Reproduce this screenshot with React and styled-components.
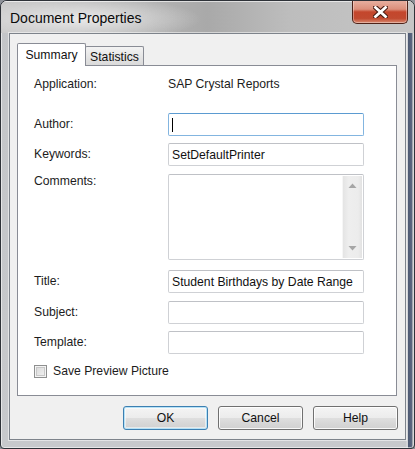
import React from "react";
import styled, { createGlobalStyle } from "styled-components";

const Global = createGlobalStyle`
  html, body { margin: 0; padding: 0; background: #8d9198; }
  body { font-family: "Segoe UI", "Liberation Sans", Arial, sans-serif; }
  * { box-sizing: border-box; }
`;

const Window = styled.div`
  width: 415px;
  height: 449px;
  display: flex;
  flex-direction: column;
  border: 1px solid #2e3238;
  border-radius: 7px 7px 4px 4px;
  padding: 0 8px 8px 8px;
  overflow: hidden;
  background:
    linear-gradient(to right, transparent 405px, #d2d4d7 405px, #d2d4d7 407px, #4d5972 407px, #5b6781 411px, #a2a7ae 411px) 0 30px / 100% 100% no-repeat,
    linear-gradient(to bottom, #c3c5c8, #c7c9cc);
  box-shadow: inset 0 0 0 1px rgba(255, 255, 255, 0.55);
`;

const TitleBar = styled.div`
  height: 32px;
  margin: 0 -8px;
  padding: 0 6px 0 9px;
  display: flex;
  align-items: flex-start;
  justify-content: space-between;
  background:
    radial-gradient(ellipse 120px 22px at 80px 17px, rgba(236, 236, 236, 0.95), rgba(236, 236, 236, 0)),
    linear-gradient(to right, #c8c8c8 0%, #b4b4b4 35%, #a9a9a9 50%, #bdbdbd 70%, #c6c6c6 100%);
  border-top: 1px solid rgba(255, 255, 255, 0.6);
`;

const Title = styled.span`
  font-size: 14px;
  line-height: 16px;
  margin-top: 8px;
  color: #0a0a0a;
`;

const CloseButton = styled.div`
  width: 56px;
  height: 24px;
  margin-top: -2px;
  border: 1px solid #4e2218;
  border-top: none;
  border-radius: 0 0 5px 5px;
  background: linear-gradient(
    to bottom,
    #e8b2a3 0%,
    #dc8f7b 40%,
    #c4462c 52%,
    #c14a30 80%,
    #d98a70 100%
  );
  box-shadow: inset 0 0 0 1px rgba(255, 255, 255, 0.35);
  display: flex;
  align-items: center;
  justify-content: center;
`;

const Client = styled.div`
  flex: 1;
  display: flex;
  flex-direction: column;
  background: #f0f0f0;
  border: 1px solid #7d838b;
  box-shadow: 0 0 0 1px rgba(255, 255, 255, 0.5);
  padding: 9px 8px 0 7px;
`;

const TabStrip = styled.div`
  display: flex;
  align-items: flex-end;
  height: 23px;
  margin-bottom: -1px;
  position: relative;
  z-index: 1;
`;

const Tab = styled.div`
  width: ${(p) => (p.$active ? "69px" : "59px")};
  height: ${(p) => (p.$active ? "23px" : "19px")};
  margin-bottom: ${(p) => (p.$active ? "0" : "1px")};
  margin-left: ${(p) => (p.$active ? "0" : "-1px")};
  padding-top: ${(p) => (p.$active ? "0" : "1px")};
  border: 1px solid #898c95;
  border-bottom: none;
  border-radius: 2px 2px 0 0;
  background: ${(p) =>
    p.$active ? "#ffffff" : "linear-gradient(to bottom, #f3f3f3, #e6e6e6 50%, #dadada)"};
  position: relative;
  z-index: ${(p) => (p.$active ? 2 : 1)};
  display: flex;
  align-items: center;
  justify-content: center;
  font-size: 12.2px;
  color: #111;
`;

const Panel = styled.div`
  height: 331px;
  background: #ffffff;
  border: 1px solid #898c95;
  padding: 11px 0 0 16px;
  display: flex;
  flex-direction: column;
`;

const Row = styled.div`
  display: grid;
  grid-template-columns: 134px 196px;
  align-items: ${(p) => (p.$top ? "start" : "center")};
  margin-top: ${(p) => p.$mt || 0}px;
  min-height: ${(p) => p.$h || 15}px;
`;

const Label = styled.span`
  font-size: 12.2px;
  line-height: 15px;
  color: #1c1c1c;
`;

const Value = styled.span`
  font-size: 12.2px;
  line-height: 15px;
  color: #1c1c1c;
`;

const Field = styled.div`
  height: ${(p) => p.$h || 23}px;
  border: 1px solid ${(p) => (p.$focus ? "#83b5e0" : "#cfd1d5")};
  border-top-color: ${(p) => (p.$focus ? "#5b9bd1" : "#bfc1c6")};
  border-radius: 2px;
  background: #fff;
  padding: 0 3px;
  display: flex;
  align-items: center;
  font-size: 12.2px;
  color: #111;
  position: relative;
`;

const Caret = styled.span`
  width: 1px;
  height: 14px;
  background: #000;
`;

const MultiField = styled(Field)`
  padding: 0;
  justify-content: flex-end;
  align-items: stretch;
`;

const ScrollBar = styled.div`
  width: 20px;
  margin: 1px 1px 1px 0;
  display: flex;
  flex-direction: column;
  justify-content: space-between;
  background: linear-gradient(to right, #e4e4e4, #eeeeee 30%, #ececec 80%, #e2e2e2);
  border-left: 1px solid #f6f6f6;
`;

const ScrollArrow = styled.div`
  height: 20px;
  display: flex;
  align-items: center;
  justify-content: center;
`;

const CheckRow = styled.label`
  display: flex;
  align-items: center;
  gap: 6px;
  margin-top: ${(p) => p.$mt || 0}px;
  font-size: 12.2px;
  line-height: 15px;
  color: #1c1c1c;
`;

const CheckBox = styled.span`
  width: 13px;
  height: 13px;
  border: 1px solid #8e8f8f;
  background: linear-gradient(135deg, #d6d6d6, #f4f4f4);
  box-shadow: inset 0 0 0 1px #f4f4f4, inset 0 0 0 2px #c8c8c8;
`;

const ButtonRow = styled.div`
  display: flex;
  justify-content: flex-end;
  gap: 10px;
  margin-top: 10px;
  margin-right: -1px;
`;

const Button = styled.div`
  width: 85px;
  height: 24px;
  border: 1px solid ${(p) => (p.$default ? "#3c7fb1" : "#707070")};
  border-radius: 3px;
  background: linear-gradient(to bottom, #f4f4f4 0%, #ececec 48%, #dedede 52%, #d0d0d0 100%);
  box-shadow: ${(p) =>
    p.$default
      ? "inset 0 0 0 1px #b6e2f7, inset 0 0 0 2px rgba(255,255,255,0.5)"
      : "inset 0 0 0 1px rgba(255,255,255,0.85)"};
  display: flex;
  align-items: center;
  justify-content: center;
  font-size: 12.2px;
  color: #111;
`;

const CloseGlyph = () => (
  <svg width="15" height="12" viewBox="0 0 15 12">
    <path d="M2.5 1.5 L12.5 10.5 M12.5 1.5 L2.5 10.5" stroke="#4a1d14" strokeWidth="5" strokeLinecap="square" />
    <path d="M2.5 1.5 L12.5 10.5 M12.5 1.5 L2.5 10.5" stroke="#ffffff" strokeWidth="2.8" strokeLinecap="square" />
  </svg>
);

const Arrow = ({ up }) => (
  <svg width="9" height="6" viewBox="0 0 9 6">
    <polygon points={up ? "4.5,0.5 8.5,5 0.5,5" : "0.5,1 8.5,1 4.5,5.5"} fill="#a6a6a6" />
  </svg>
);

export default function App() {
  return (
    <>
      <Global />
      <Window>
        <TitleBar>
          <Title>Document Properties</Title>
          <CloseButton>
            <CloseGlyph />
          </CloseButton>
        </TitleBar>
        <Client>
          <TabStrip>
            <Tab $active>Summary</Tab>
            <Tab>Statistics</Tab>
          </TabStrip>
          <Panel>
            <Row>
              <Label>Application:</Label>
              <Value>SAP Crystal Reports</Value>
            </Row>
            <Row $mt={21} $h={23}>
              <Label>Author:</Label>
              <Field $focus>
                <Caret />
              </Field>
            </Row>
            <Row $mt={7} $h={23}>
              <Label>Keywords:</Label>
              <Field>SetDefaultPrinter</Field>
            </Row>
            <Row $mt={8} $h={86} $top>
              <Label>Comments:</Label>
              <MultiField $h={86}>
                <ScrollBar>
                  <ScrollArrow>
                    <Arrow up />
                  </ScrollArrow>
                  <ScrollArrow>
                    <Arrow />
                  </ScrollArrow>
                </ScrollBar>
              </MultiField>
            </Row>
            <Row $mt={10} $h={23}>
              <Label>Title:</Label>
              <Field>Student Birthdays by Date Range</Field>
            </Row>
            <Row $mt={8} $h={23}>
              <Label>Subject:</Label>
              <Field />
            </Row>
            <Row $mt={7} $h={23}>
              <Label>Template:</Label>
              <Field />
            </Row>
            <CheckRow $mt={10}>
              <CheckBox />
              Save Preview Picture
            </CheckRow>
          </Panel>
          <ButtonRow>
            <Button $default>OK</Button>
            <Button>Cancel</Button>
            <Button>Help</Button>
          </ButtonRow>
        </Client>
      </Window>
    </>
  );
}
